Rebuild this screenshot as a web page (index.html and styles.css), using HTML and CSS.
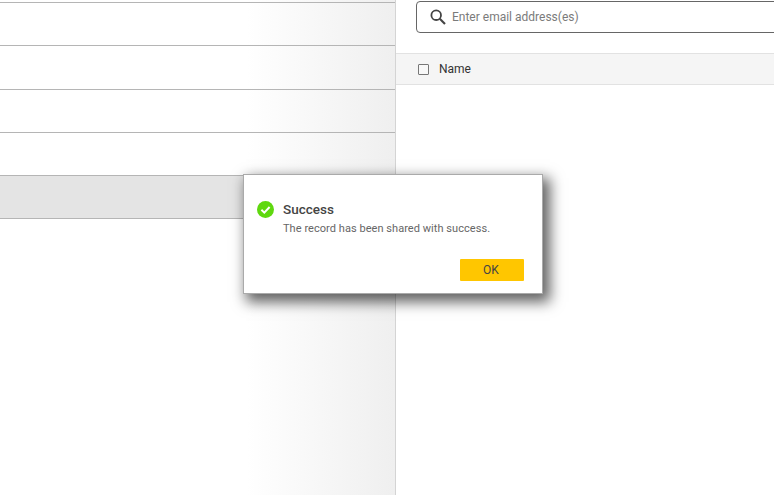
FILE: index.html
```html
<!DOCTYPE html>
<html lang="en">
<head>
<meta charset="utf-8">
<title>Share record</title>
<link rel="stylesheet" href="styles.css">
</head>
<body>
<div class="page">
  <section class="left">
    <div class="fade"></div>
    <div class="row"></div>
    <div class="row"></div>
    <div class="row"></div>
    <div class="row"></div>
    <div class="row row-selected"></div>
    <div class="row row-end"></div>
  </section>
  <section class="right">
    <div class="search">
      <svg class="search-icon" width="18" height="18" viewBox="0 0 18 18" fill="none" stroke="#444" stroke-width="1.8"><circle cx="7.2" cy="7.2" r="4.8"/><path d="M10.8 10.8L16 16" stroke-width="2.1"/></svg>
      <span class="placeholder">Enter email address(es)</span>
    </div>
    <div class="thead">
      <span class="checkbox"></span>
      <span class="name">Name</span>
    </div>
  </section>
</div>
<div class="dialog">
  <div class="dialog-body">
    <svg class="ok-icon" width="17" height="17" viewBox="0 0 17 17"><circle cx="8.5" cy="8.5" r="8.5" fill="#5fd80f"/><path d="M4.4 8.8L7.3 11.6L12.6 6" fill="none" stroke="#fff" stroke-width="2"/></svg>
    <div>
      <div class="dialog-title">Success</div>
      <div class="dialog-text">The record has been shared with success.</div>
    </div>
  </div>
  <div class="dialog-actions"><button class="ok-btn">OK</button></div>
</div>
</body>
</html>
```
FILE: styles.css
```css
* { box-sizing: border-box; }
html, body { margin: 0; height: 100%; overflow: hidden; background: #fff; }
body { font-family: "Roboto", "Noto Sans", sans-serif; }
.page { display: flex; height: 495px; width: 774px; overflow: hidden; }
.left { position: relative; width: 396px; flex: none; padding-top: 2px; border-right: 1px solid #d4d4d4; }
.row { position: relative; height: 43.3px; border-top: 1px solid #b5b5b5; }
.row-selected { background: #e4e4e4; }
.row-end { height: 0; }
.fade { position: absolute; top: 0; right: 0; bottom: 0; width: 148px; background: linear-gradient(to right, rgba(239,239,239,0), rgba(239,239,239,1)); }
.right { flex: 1; min-width: 0; padding-top: 1px; }
.search { display: flex; align-items: center; margin-left: 20px; width: 400px; height: 32px; border: 1px solid #666; border-radius: 4px; padding-left: 12px; gap: 5px; }
.placeholder { font-size: 12px; color: #7b7b7b; }
.thead { display: flex; align-items: center; margin-top: 20px; height: 32px; background: #f5f5f5; border-top: 1px solid #e2e2e2; border-bottom: 1px solid #e2e2e2; padding-left: 22px; }
.checkbox { width: 11px; height: 11px; border: 1px solid #777; border-radius: 1px; background: #f8f8f8; }
.name { margin-left: 10px; font-size: 12px; color: #333; }
.dialog { position: absolute; left: 243px; top: 174px; width: 300px; height: 120px; background: #fff; border: 1px solid #aaa; box-shadow: 5px 6px 13px 2px rgba(0,0,0,0.62); display: flex; flex-direction: column; }
.dialog-body { display: flex; gap: 9px; padding: 26px 13px 0; }
.ok-icon { flex: none; }
.dialog-title { font-size: 13.5px; font-weight: 500; color: #444; line-height: 17px; }
.dialog-text { font-size: 11px; letter-spacing: 0.05px; color: #666; line-height: 14px; margin-top: 4px; }
.dialog-actions { margin-top: auto; display: flex; justify-content: flex-end; padding: 0 18px 12px 0; }
.ok-btn { width: 64px; height: 22px; background: #ffc600; border: none; border-radius: 1px; font: inherit; font-size: 12px; color: #444; padding: 0 2px 0 0; }
```
